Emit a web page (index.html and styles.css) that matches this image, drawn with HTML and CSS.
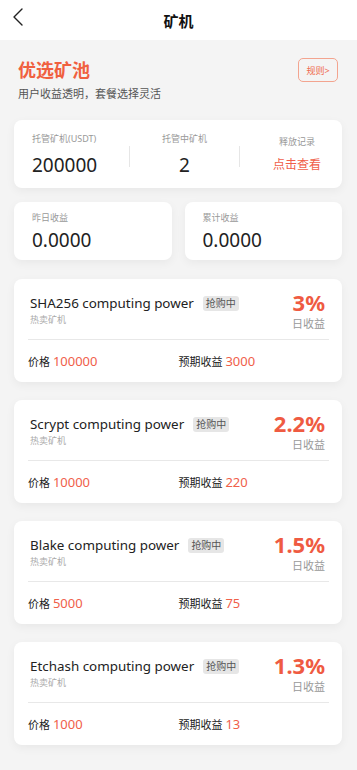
FILE: index.html
```html
<!DOCTYPE html>
<html lang="zh">
<head>
<meta charset="utf-8">
<title>矿机</title>
<link rel="stylesheet" href="styles.css">
</head>
<body>
<header class="topbar">
  <svg class="back" width="12" height="18" viewBox="0 0 12 18"><polyline points="10,1 2,9 10,17" fill="none" stroke="#222" stroke-width="1.4" stroke-linecap="round" stroke-linejoin="round"/></svg>
  <h1 class="topbar-title">矿机</h1>
</header>
<main class="page">
  <section class="intro">
    <div>
      <h2 class="intro-title">优选矿池</h2>
      <p class="intro-sub">用户收益透明，套餐选择灵活</p>
    </div>
    <button class="rule-btn">规则&gt;</button>
  </section>

  <section class="card stats">
    <div class="stat">
      <div class="stat-label">托管矿机(USDT)</div>
      <div class="stat-value">200000</div>
    </div>
    <div class="vline"></div>
    <div class="stat center">
      <div class="stat-label">托管中矿机</div>
      <div class="stat-value">2</div>
    </div>
    <div class="vline"></div>
    <div class="stat center last">
      <div class="stat-label">释放记录</div>
      <div class="stat-link">点击查看</div>
    </div>
  </section>

  <section class="earn-row">
    <div class="card earn">
      <div class="stat-label">昨日收益</div>
      <div class="earn-value">0.0000</div>
    </div>
    <div class="card earn">
      <div class="stat-label">累计收益</div>
      <div class="earn-value">0.0000</div>
    </div>
  </section>

  <section class="products">
    <article class="card product">
      <div class="p-top">
        <div class="p-left">
          <div class="p-title-row"><span class="p-title">SHA256 computing power</span><span class="badge">抢购中</span></div>
          <div class="p-sub">热卖矿机</div>
        </div>
        <div class="p-right">
          <div class="p-rate">3%</div>
          <div class="p-rate-label">日收益</div>
        </div>
      </div>
      <div class="p-bottom">
        <div>价格 <span class="num">100000</span></div>
        <div>预期收益 <span class="num">3000</span></div>
      </div>
    </article>

    <article class="card product">
      <div class="p-top">
        <div class="p-left">
          <div class="p-title-row"><span class="p-title">Scrypt computing power</span><span class="badge">抢购中</span></div>
          <div class="p-sub">热卖矿机</div>
        </div>
        <div class="p-right">
          <div class="p-rate">2.2%</div>
          <div class="p-rate-label">日收益</div>
        </div>
      </div>
      <div class="p-bottom">
        <div>价格 <span class="num">10000</span></div>
        <div>预期收益 <span class="num">220</span></div>
      </div>
    </article>

    <article class="card product">
      <div class="p-top">
        <div class="p-left">
          <div class="p-title-row"><span class="p-title">Blake computing power</span><span class="badge">抢购中</span></div>
          <div class="p-sub">热卖矿机</div>
        </div>
        <div class="p-right">
          <div class="p-rate">1.5%</div>
          <div class="p-rate-label">日收益</div>
        </div>
      </div>
      <div class="p-bottom">
        <div>价格 <span class="num">5000</span></div>
        <div>预期收益 <span class="num">75</span></div>
      </div>
    </article>

    <article class="card product">
      <div class="p-top">
        <div class="p-left">
          <div class="p-title-row"><span class="p-title">Etchash computing power</span><span class="badge">抢购中</span></div>
          <div class="p-sub">热卖矿机</div>
        </div>
        <div class="p-right">
          <div class="p-rate">1.3%</div>
          <div class="p-rate-label">日收益</div>
        </div>
      </div>
      <div class="p-bottom">
        <div>价格 <span class="num">1000</span></div>
        <div>预期收益 <span class="num">13</span></div>
      </div>
    </article>
  </section>
</main>
</body>
</html>
```

FILE: styles.css
```css
* { box-sizing: border-box; }
html, body { margin: 0; padding: 0; }
body {
  background: #f4f4f4;
  font-family: "Noto Sans", "Noto Sans CJK SC", sans-serif;
  color: #222;
  width: 357px;
  min-height: 770px;
}
.topbar {
  height: 40px;
  background: #fff;
  display: flex;
  align-items: center;
  justify-content: center;
  position: relative;
}
.back {
  position: absolute;
  left: 12px;
  top: 8px;
}
.topbar-title {
  margin: 0;
  font-size: 15px;
  font-weight: 700;
  color: #111;
  line-height: 20px;
  padding-top: 1px;
}
.page {
  padding: 18px 15px 30px 14px;
}
.intro {
  display: flex;
  justify-content: space-between;
  align-items: flex-start;
  padding: 0 4px 0 4px;
}
.intro-title {
  margin: 0;
  font-size: 18px;
  line-height: 24px;
  font-weight: 700;
  color: #f0603f;
}
.intro-sub {
  margin: 4px 0 0;
  font-size: 11px;
  line-height: 16px;
  color: #555;
}
.rule-btn {
  width: 40px;
  height: 24px;
  border: 1px solid #f3a48f;
  border-radius: 5px;
  background: transparent;
  color: #ef6a4f;
  font-family: inherit;
  font-size: 9px;
  padding: 0;
  margin-top: 0;
}
.card {
  background: #fff;
  border-radius: 8px;
  box-shadow: 0 3px 10px rgba(0, 0, 0, 0.05);
}
.stats {
  margin-top: 18px;
  display: grid;
  grid-template-columns: 97px 1px 109px 1px 1fr;
  align-items: center;
  padding: 12px 0 11px 18px;
}
.stat.center { text-align: center; }
.stat.last { padding-left: 12px; }
.stat-label {
  font-size: 9px;
  line-height: 13px;
  color: #999;
}
.stat-value {
  margin-top: 8px;
  font-size: 19px;
  line-height: 24px;
  color: #222;
}
.stat.last .stat-label { margin-top: 3px; }
.stat-link {
  margin-top: 5px;
  font-size: 12px;
  line-height: 24px;
  color: #f0604a;
}
.vline {
  width: 1px;
  height: 21px;
  background: #e6e6e6;
  margin-top: 3px;
}
.earn-row {
  margin-top: 14px;
  display: grid;
  grid-template-columns: 1fr 1fr;
  gap: 13px;
}
.earn {
  padding: 9px 18px 8px;
}
.earn-value {
  margin-top: 4px;
  font-size: 19px;
  line-height: 24px;
  color: #222;
}
.products {
  margin-top: 19px;
  display: flex;
  flex-direction: column;
  gap: 18px;
}
.product {
  height: 103px;
  padding: 10px 13px 0 14px;
}
.p-top {
  display: flex;
  justify-content: space-between;
  align-items: flex-start;
  padding: 0 4px 0 2px;
  height: 43px;
}
.p-left { margin-top: 4px; }
.p-title-row {
  display: flex;
  align-items: center;
  height: 20px;
}
.p-title {
  font-size: 13.4px;
  line-height: 20px;
  color: #222;
}
.badge {
  margin-left: 9px;
  background: #e6e6e6;
  color: #555;
  font-size: 10px;
  line-height: 15px;
  height: 15px;
  padding: 0 3px;
  border-radius: 3px;
}
.p-sub {
  font-size: 9px;
  line-height: 14px;
  color: #aaa;
}
.p-right {
  text-align: right;
  margin-top: 1px;
}
.p-rate {
  font-size: 22px;
  line-height: 24px;
  font-weight: 700;
  color: #ef5b42;
}
.p-rate-label {
  margin-top: 3px;
  font-size: 11px;
  line-height: 14px;
  color: #999;
}
.p-bottom {
  margin-top: 7px;
  border-top: 1px solid #e8e8e8;
  padding-top: 11px;
  display: grid;
  grid-template-columns: 1fr 1fr;
  font-size: 11px;
  line-height: 20px;
  color: #222;
}
.num {
  font-size: 13px;
  color: #f0604a;
}
```
